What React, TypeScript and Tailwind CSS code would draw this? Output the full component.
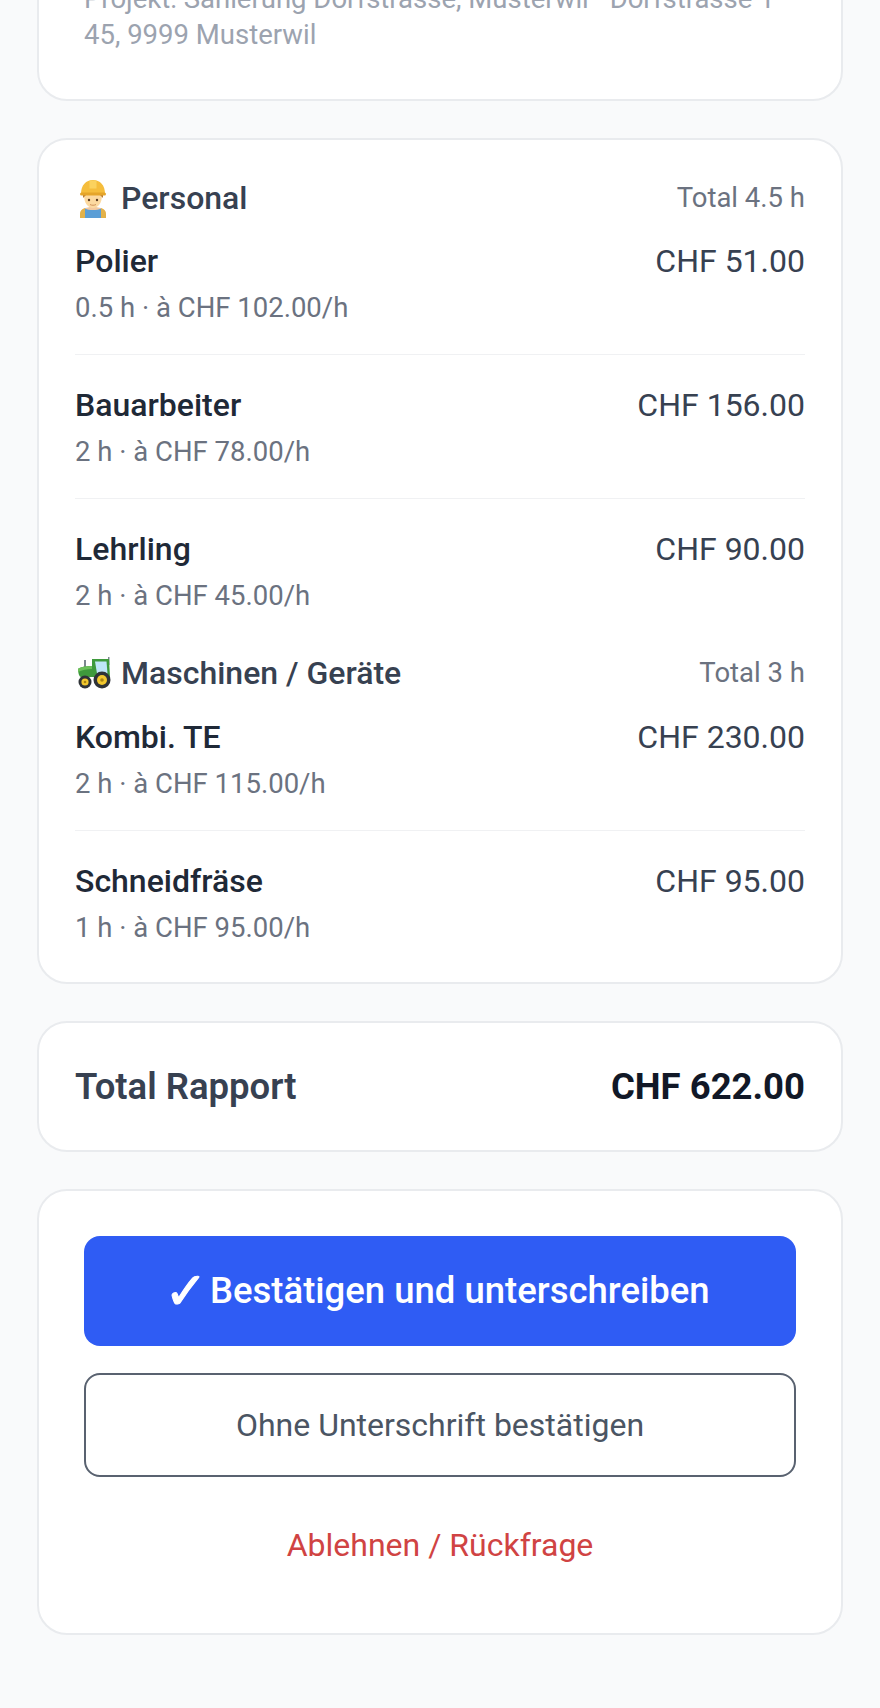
const font = { fontFamily: 'Roboto, sans-serif' };

type Item = { name: string; detail: string; price: string };

const personal: Item[] = [
  { name: 'Polier', detail: '0.5 h · à CHF 102.00/h', price: 'CHF 51.00' },
  { name: 'Bauarbeiter', detail: '2 h · à CHF 78.00/h', price: 'CHF 156.00' },
  { name: 'Lehrling', detail: '2 h · à CHF 45.00/h', price: 'CHF 90.00' },
];

const machines: Item[] = [
  { name: 'Kombi. TE', detail: '2 h · à CHF 115.00/h', price: 'CHF 230.00' },
  { name: 'Schneidfräse', detail: '1 h · à CHF 95.00/h', price: 'CHF 95.00' },
];

// Construction worker emoji, drawn because no emoji font is installed.
function WorkerIcon() {
  return (
    <svg width="36" height="40" viewBox="0 0 36 40" className="shrink-0">
      <path d="M5 40v-4c0-5 5-7 13-7s13 2 13 7v4z" fill="#f3c9a0" />
      <path d="M5 40v-4c0-3 2-5 5-6v10z M31 40v-4c0-3-2-5-5-6v10z" fill="#e3b24a" />
      <path d="M10 40V30.500c2 1 5 1.500 8 1.500s6-.5 8-1.500V40z" fill="#5b9ed6" />
      <path d="M9 17c0 8 4 13 9 13s9-5 9-13z" fill="#fcd9a0" />
      <path d="M8 17c0-1 1-2 2-2h16c1 0 2 1 2 2v3c-1-1-2-2-3-3H11c-1 1-2 2-3 3z" fill="#b9792f" />
      <circle cx="14" cy="22" r="1.200" fill="#5a3b22" />
      <circle cx="22" cy="22" r="1.200" fill="#5a3b22" />
      <path d="M15 26.500c1.800 1 4.200 1 6 0" stroke="#c98a55" strokeWidth="0.900" fill="none" />
      <path d="M6 16C6 7 11 2 18 2s12 5 12 14z" fill="#f5bd3c" />
      <path d="M14.500 2.500h7v8h-7z" fill="#fbd25e" />
      <rect x="5" y="14.500" width="26" height="3" rx="1.500" fill="#e5a52a" />
    </svg>
  );
}

function TractorIcon() {
  return (
    <svg width="36" height="32" viewBox="0 0 36 32" className="shrink-0">
      <rect x="9" y="3" width="2" height="9" fill="#7d8790" />
      <rect x="33" y="0" width="1.500" height="8" fill="#7d8790" />
      <path d="M3 12c2-2 8-3 14-3v-7h17l1 18H6c-2 0-3-5-3-8z" fill="#3e9a3c" />
      <path d="M20 4.500h11.500l1 12H22z" fill="#bfe6f7" />
      <path d="M3 12c2-2 8-3 14-3v3c-5 0-10 1-14 3z" fill="#6cc05a" />
      <circle cx="10" cy="25" r="6.500" fill="#2f3338" />
      <circle cx="10" cy="25" r="3.600" fill="#f2c82e" />
      <circle cx="10" cy="25" r="1.300" fill="#a98414" />
      <circle cx="27" cy="23" r="8.500" fill="#2f3338" />
      <circle cx="27" cy="23" r="5" fill="#f2c82e" />
      <circle cx="27" cy="23" r="1.800" fill="#a98414" />
    </svg>
  );
}

function Row({ item, divider }: { item: Item; divider: boolean }) {
  return (
    <div className={divider ? 'mb-[30px] border-b border-[#f0f1f3] pb-[26px]' : ''}>
      <div className="flex items-start justify-between">
        <span className="text-[32px] leading-[40px] font-medium text-[#1f2937]">{item.name}</span>
        <span className="text-[32px] leading-[40px] text-[#374151]">{item.price}</span>
      </div>
      <div className="mt-[7px] text-[27.500px] leading-[40px] text-[#6b7280]">{item.detail}</div>
    </div>
  );
}

function SectionHead({ icon, title, total }: { icon: React.ReactNode; title: string; total: string }) {
  return (
    <div className="flex h-[40px] items-center justify-between">
      <div className="flex items-center gap-[10px]">
        <span className="flex w-[36px] justify-center">{icon}</span>
        <span className="text-[32px] font-medium text-[#374151]">{title}</span>
      </div>
      <span className="text-[27.500px] text-[#6b7280]">{total}</span>
    </div>
  );
}

export default function App() {
  return (
    <div style={font} className="h-[1708px] overflow-hidden bg-[#f9fafb] px-[37px]">
      <div className="-mt-[60px] h-[161px] rounded-[30px] border-2 border-[#e9ebee] bg-white px-[45px] pt-[39px] text-[27.500px] leading-[36px] text-[#9ca3af]">
        Projekt: Sanierung Dorfstrasse, Musterwil · Dorfstrasse 1
        <br />
        45, 9999 Musterwil
      </div>

      <div className="mt-[37px] h-[846px] rounded-[30px] border-2 border-[#e9ebee] bg-white px-[36px] pt-[38px]">
        <SectionHead icon={<WorkerIcon />} title="Personal" total="Total 4.5 h" />
        <div className="mt-[23px]">
          {personal.map((item, i) => (
            <Row key={item.name} item={item} divider={i < personal.length - 1} />
          ))}
        </div>
        <div className="mt-[37px]">
          <SectionHead icon={<TractorIcon />} title="Maschinen / Geräte" total="Total 3 h" />
        </div>
        <div className="mt-[24px]">
          {machines.map((item, i) => (
            <Row key={item.name} item={item} divider={i < machines.length - 1} />
          ))}
        </div>
      </div>

      <div className="mt-[37px] flex h-[131px] items-center justify-between rounded-[30px] border-2 border-[#e9ebee] bg-white px-[36px] pt-[1px]">
        <span className="text-[36.500px] font-semibold text-[#374151]">Total Rapport</span>
        <span className="text-[36.500px] font-bold text-[#111827]">CHF 622.00</span>
      </div>

      <div className="mt-[37px] h-[446px] rounded-[30px] border-2 border-[#e9ebee] bg-white px-[45px] pt-[45px]">
        <button className="flex h-[110px] w-full items-center justify-center rounded-[16px] bg-[#2f5cf4] pr-[6px] text-[36.500px] font-medium text-white">
          <span className="mr-[2px] text-[52px] leading-none [-webkit-text-stroke:1px_white] [font-family:'DejaVu_Sans']">✓</span>
          Bestätigen und unterschreiben
        </button>
        <button className="mt-[27px] flex h-[104px] w-full items-center justify-center rounded-[16px] border-2 border-[#596270] text-[32px] text-[#4b5563]">
          Ohne Unterschrift bestätigen
        </button>
        <button className="mt-[23px] flex h-[90px] w-full items-center justify-center text-[32px] text-[#d04343]">
          Ablehnen / Rückfrage
        </button>
      </div>
    </div>
  );
}
